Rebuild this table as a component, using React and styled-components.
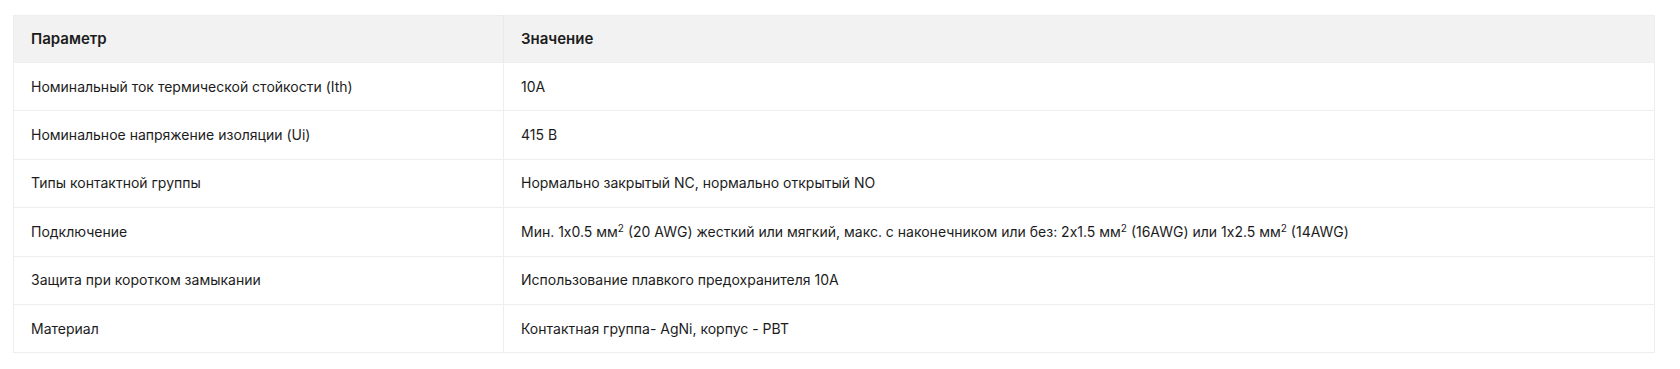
import React from 'react';
import styled, {createGlobalStyle} from 'styled-components';

const GlobalStyle = createGlobalStyle`
    body {
        margin: 0;
        background: #fff;
        font-family: Inter, "Noto Sans", sans-serif;
        color: #1c1c1c;
    }
`;

const StyledPage = styled.div`
    padding: 15px 25px 16px 13px;
`;

const StyledTable = styled.table`
    width: 100%;
    border-collapse: collapse;
    border: 1px solid #eeeeee;
    font-size: 14px;
    line-height: 20px;
`;

const StyledHeadCell = styled.th`
    background: #f2f2f2;
    font-weight: 600;
    font-size: 15px;
    text-align: left;
    height: 47px;
    padding: 0 17px;
    box-sizing: border-box;
    border-left: ${props => props.first ? 'none' : '1px solid #e9e9e9'};
    width: ${props => props.first ? '490px' : 'auto'};
`;

const StyledCell = styled.td`
    height: 48.4px;
    padding: 0 17px;
    box-sizing: border-box;
    border-top: 1px solid #eeeeee;
    border-left: ${props => props.first ? 'none' : '1px solid #eeeeee'};
    vertical-align: middle;

    sup {
        font-size: 10px;
        line-height: 0;
        vertical-align: 5px;
    }
`;

const specs = [
    {name: 'Номинальный ток термической стойкости (Ith)', value: '10A'},
    {name: 'Номинальное напряжение изоляции (Ui)', value: '415 В'},
    {name: 'Типы контактной группы', value: 'Нормально закрытый NC, нормально открытый NO'},
    {
        name: 'Подключение',
        value: <>Мин. 1х0.5 мм<sup>2</sup> (20 AWG) жесткий или мягкий, макс. с наконечником или без: 2х1.5 мм<sup>2</sup> (16AWG) или 1х2.5 мм<sup>2</sup> (14AWG)</>
    },
    {name: 'Защита при коротком замыкании', value: 'Использование плавкого предохранителя 10А'},
    {name: 'Материал', value: 'Контактная группа- AgNi, корпус - PBT'},
];

const App = () => {
    return (
        <StyledPage>
            <GlobalStyle/>
            <StyledTable>
                <thead>
                    <tr>
                        <StyledHeadCell first>Параметр</StyledHeadCell>
                        <StyledHeadCell>Значение</StyledHeadCell>
                    </tr>
                </thead>
                <tbody>
                    {specs.map(spec =>
                        <tr key={spec.name}>
                            <StyledCell first>{spec.name}</StyledCell>
                            <StyledCell>{spec.value}</StyledCell>
                        </tr>
                    )}
                </tbody>
            </StyledTable>
        </StyledPage>
    );
}

export default App;
